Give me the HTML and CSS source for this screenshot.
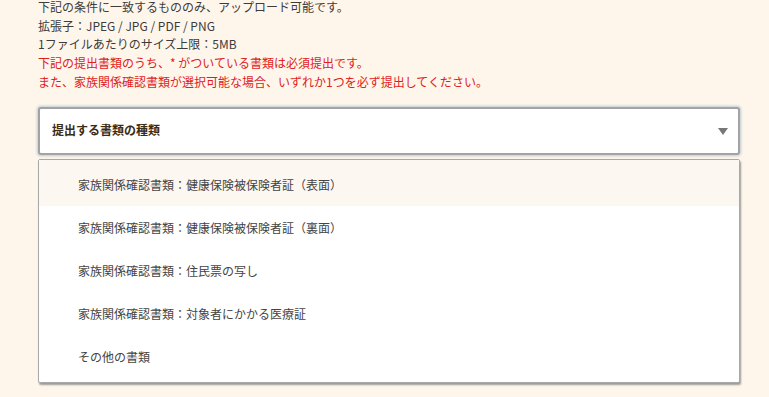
FILE: index.html
```html
<!DOCTYPE html>
<html lang="ja">
<head>
<meta charset="utf-8">
<title>書類の提出</title>
<link rel="stylesheet" href="styles.css">
</head>
<body>
<div class="page">
	<div class="notes">
		<p>下記の条件に一致するもののみ、アップロード可能です。</p>
		<p>拡張子：JPEG / JPG / PDF / PNG</p>
		<p>1ファイルあたりのサイズ上限：5MB</p>
		<p class="red">下記の提出書類のうち、* がついている書類は必須提出です。</p>
		<p class="red">また、家族関係確認書類が選択可能な場合、いずれか1つを必ず提出してください。</p>
	</div>
	<div class="select">
		<span class="select_txt">提出する書類の種類</span>
		<span class="arrow"></span>
	</div>
	<ul class="options">
		<li class="on">家族関係確認書類：健康保険被保険者証（表面）</li>
		<li>家族関係確認書類：健康保険被保険者証（裏面）</li>
		<li>家族関係確認書類：住民票の写し</li>
		<li>家族関係確認書類：対象者にかかる医療証</li>
		<li>その他の書類</li>
	</ul>
</div>
</body>
</html>
```

FILE: styles.css
```css
*{margin:0;padding:0;}
li{list-style:none;}
html,body{height:100%;}
body{background:#fff6eb;font:12px/18.7px "Noto Sans CJK JP","Liberation Sans",sans-serif;color:#3c3c3c;overflow:hidden;}
.page{padding:0 29px 0 38px;}
.notes{margin-top:-2px;}
.notes p{white-space:nowrap;}
.notes .red{color:#e0201c;}
.select{margin-top:15px;height:44px;border:2px solid #a3a3a3;border-radius:3px;background:#fff;box-shadow:0 0 3px 1px #b9cbd9;display:flex;align-items:center;justify-content:space-between;padding:0 10px 0 12px;}
.select_txt{font-size:12px;font-weight:bold;color:#3b2c14;}
.arrow{width:0;height:0;border-left:5px solid transparent;border-right:5px solid transparent;border-top:7px solid #777;margin-top:1px;}
.options{margin-top:4px;border:1px solid #a8a8a8;border-radius:2px;background:#fff;box-shadow:1px 2px 2px #9a9a9a;padding:0 0 4px;}
.options li{height:43px;line-height:43px;padding-left:39px;font-size:12px;color:#444;}
.options li.on{background:#fdf7f2;height:46px;line-height:49px;}
```
